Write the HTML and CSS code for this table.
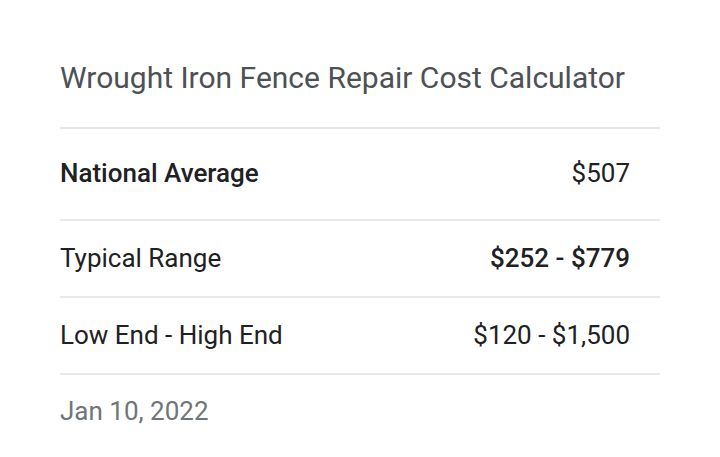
FILE: index.html
```html
<!DOCTYPE html>
<html>
<head>
<meta charset="utf-8">
<link rel="stylesheet" href="styles.css">
</head>
<body>
<div class="card">
  <h1 class="title">Wrought Iron Fence Repair Cost Calculator</h1>
  <div class="row row-first">
    <span class="label strong">National Average</span>
    <span class="value">$507</span>
  </div>
  <div class="row">
    <span class="label">Typical Range</span>
    <span class="value strong">$252 - $779</span>
  </div>
  <div class="row">
    <span class="label">Low End - High End</span>
    <span class="value">$120 - $1,500</span>
  </div>
  <div class="date">Jan 10, 2022</div>
</div>
</body>
</html>
```
FILE: styles.css
```css
html, body {
  margin: 0;
  padding: 0;
  background: #ffffff;
}
body {
  font-family: Roboto, "Noto Sans", sans-serif;
}
.card {
  width: 600px;
  margin-left: 60px;
  padding-top: 62px;
}
.title {
  margin: 0;
  font-size: 30px;
  line-height: 32px;
  font-weight: 400;
  color: #4d5156;
  padding-bottom: 33px;
  border-bottom: 2px solid #e8e8e8;
}
.row {
  display: flex;
  justify-content: space-between;
  align-items: center;
  padding: 23px 30px 24px 0;
  font-size: 26px;
  line-height: 28px;
  color: #202124;
  border-bottom: 2px solid #e8e8e8;
}
.row-first {
  padding-top: 30px;
  padding-bottom: 32px;
}
.strong {
  font-weight: 500;
}
.date {
  font-size: 26px;
  line-height: 28px;
  color: #70757a;
  padding-top: 22px;
}
```
